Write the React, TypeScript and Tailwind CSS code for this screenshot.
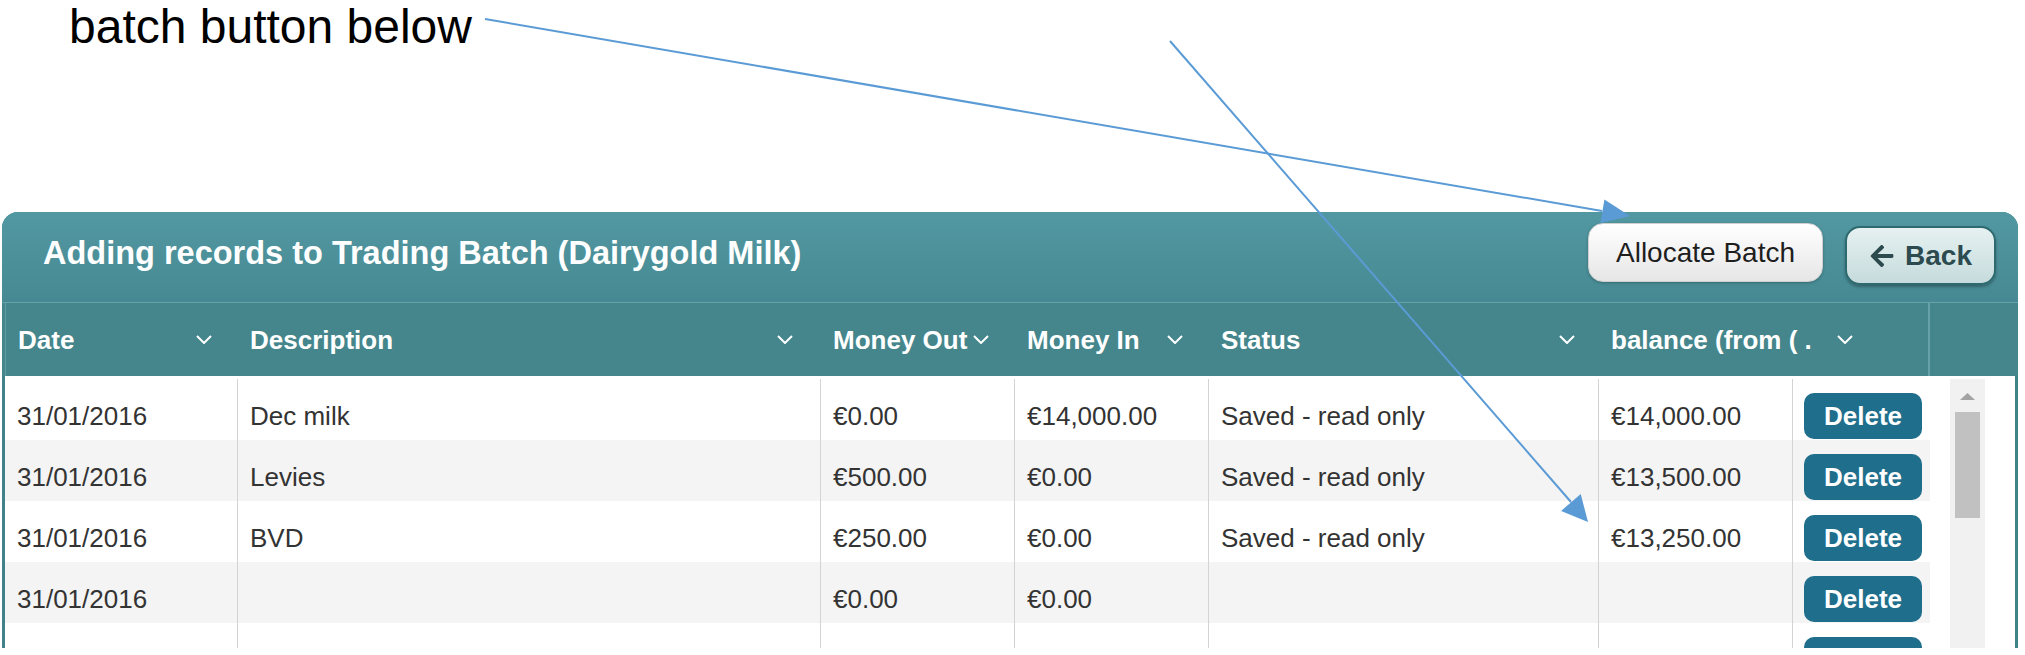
import { FaArrowLeft } from "react-icons/fa";

type Row = {
    date: string;
    description: string;
    moneyOut: string;
    moneyIn: string;
    status: string;
    balance: string;
};

const rows: Row[] = [
    { date: "31/01/2016", description: "Dec milk", moneyOut: "€0.00", moneyIn: "€14,000.00", status: "Saved - read only", balance: "€14,000.00" },
    { date: "31/01/2016", description: "Levies", moneyOut: "€500.00", moneyIn: "€0.00", status: "Saved - read only", balance: "€13,500.00" },
    { date: "31/01/2016", description: "BVD", moneyOut: "€250.00", moneyIn: "€0.00", status: "Saved - read only", balance: "€13,250.00" },
    { date: "31/01/2016", description: "", moneyOut: "€0.00", moneyIn: "€0.00", status: "", balance: "" },
    { date: "", description: "", moneyOut: "€0.00", moneyIn: "€0.00", status: "", balance: "" },
];

const headers = [
    { label: "Date", cls: "w-[233px] pr-[26px] border-l border-[#5f9ba1]" },
    { label: "Description", cls: "w-[583px] pr-[28px]" },
    { label: "Money Out", cls: "w-[194px] pr-[26px]" },
    { label: "Money In", cls: "w-[194px] pr-[26px]" },
    { label: "Status", cls: "w-[390px] pr-[24px]" },
    { label: "balance (from ( .", cls: "w-[329px] pr-[75px]" },
];

function Chevron() {
    return (
        <svg width="16" height="9" viewBox="0 0 16 9" className="shrink-0">
            <polyline points="1,1 8,8 15,1" fill="none" stroke="white" strokeWidth="2" />
        </svg>
    );
}

function Cell({ children, last }: { children?: React.ReactNode; last?: boolean }) {
    return (
        <div className={`flex items-center pt-[12px] ${last ? "pl-[11px]" : "pl-[12px] border-r border-[#d3d3d3]"}`}>
            {children}
        </div>
    );
}

export default function App() {
    return (
        <div className="relative w-[2025px] h-[655px] overflow-hidden bg-white font-['Liberation_Sans',Arial,sans-serif]">
            <div className="h-[212px] pl-[69px] pt-[3px]">
                <span className="text-[48px] leading-none text-black">batch button below</span>
            </div>

            <section className="ml-[2px] w-[2016px] h-[436px] flex flex-col rounded-t-[16px] bg-[#3f8289] overflow-hidden">
                {/* title bar */}
                <div className="h-[90px] shrink-0 flex items-start pl-[41px] pr-[22px] bg-linear-to-b from-[#5298a2] to-[#468992]">
                    <h1 className="mt-[25px] text-[32.5px] leading-none font-bold text-white">
                        Adding records to Trading Batch (Dairygold Milk)
                    </h1>
                    <button className="ml-auto mt-[11px] w-[235px] h-[59px] rounded-[15px] border border-[#cfcfcf] bg-linear-to-b from-white to-[#e6e6e6] text-[28px] leading-none text-[#1e1e1e] shadow-[0_1px_3px_rgba(0,0,0,0.25)]">
                        Allocate Batch
                    </button>
                    <button className="ml-[22px] mt-[14px] w-[151px] h-[59px] rounded-[15px] border-2 border-[#2d6a70] bg-linear-to-b from-[#e6f1f1] to-[#c6dbdc] flex items-center justify-center gap-[10px] text-[28px] leading-none font-bold text-[#2d4a4f] shadow-[0_2px_3px_rgba(0,0,0,0.3)]">
                        <FaArrowLeft size={26} />
                        Back
                    </button>
                </div>

                {/* column headers */}
                <div className="h-[74px] shrink-0 flex pl-[3px] bg-[#44868c] border-t border-[#66a2a7]">
                    {headers.map((h) => (
                        <div key={h.label} className={`flex items-center justify-between pl-[12px] ${h.cls}`}>
                            <span className="text-[26px] leading-none font-bold text-white whitespace-nowrap">{h.label}</span>
                            <Chevron />
                        </div>
                    ))}
                    <div className="flex-1 border-l-2 border-[#66a2a7]" />
                </div>

                {/* body */}
                <div className="h-[272px] mx-[3px] flex bg-white pt-[3px] overflow-hidden">
                    <div className="w-[1925px] flex flex-col">
                        {rows.map((r, i) => (
                            <div
                                key={i}
                                className={`grid grid-cols-[233px_583px_194px_194px_390px_194px_137px] h-[61px] shrink-0 text-[26px] leading-none text-[#333] ${i % 2 === 1 ? "bg-[#f4f4f4]" : "bg-white"}`}
                            >
                                <Cell>{r.date}</Cell>
                                <Cell>{r.description}</Cell>
                                <Cell>{r.moneyOut}</Cell>
                                <Cell>{r.moneyIn}</Cell>
                                <Cell>{r.status}</Cell>
                                <Cell>{r.balance}</Cell>
                                <Cell last>
                                    <button className="w-[118px] h-[46px] rounded-[10px] bg-[#1e6e8c] text-[26px] leading-none font-bold text-white">
                                        Delete
                                    </button>
                                </Cell>
                            </div>
                        ))}
                    </div>
                    <div className="ml-[20px] w-[35px] bg-[#f1f1f1] flex flex-col items-center">
                        <svg width="15" height="7" viewBox="0 0 15 7" className="mt-[14px]">
                            <polygon points="7.5,0 15,7 0,7" fill="#a3a3a3" />
                        </svg>
                        <div className="mt-[12px] w-[25px] h-[106px] bg-[#c1c1c1]" />
                    </div>
                </div>
            </section>

            {/* callout arrows */}
            <svg className="absolute inset-0 pointer-events-none" width="2025" height="655" viewBox="0 0 2025 655">
                <line x1="485" y1="19" x2="1602" y2="211" stroke="#5b9bd5" strokeWidth="2" />
                <polygon points="1630,216 1600.4,223.1 1604.4,199.5" fill="#5b9bd5" />
                <line x1="1170" y1="41" x2="1571" y2="502" stroke="#5b9bd5" strokeWidth="2" />
                <polygon points="1588,522 1561.1,510.9 1580.7,493.9" fill="#5b9bd5" />
            </svg>
        </div>
    );
}
